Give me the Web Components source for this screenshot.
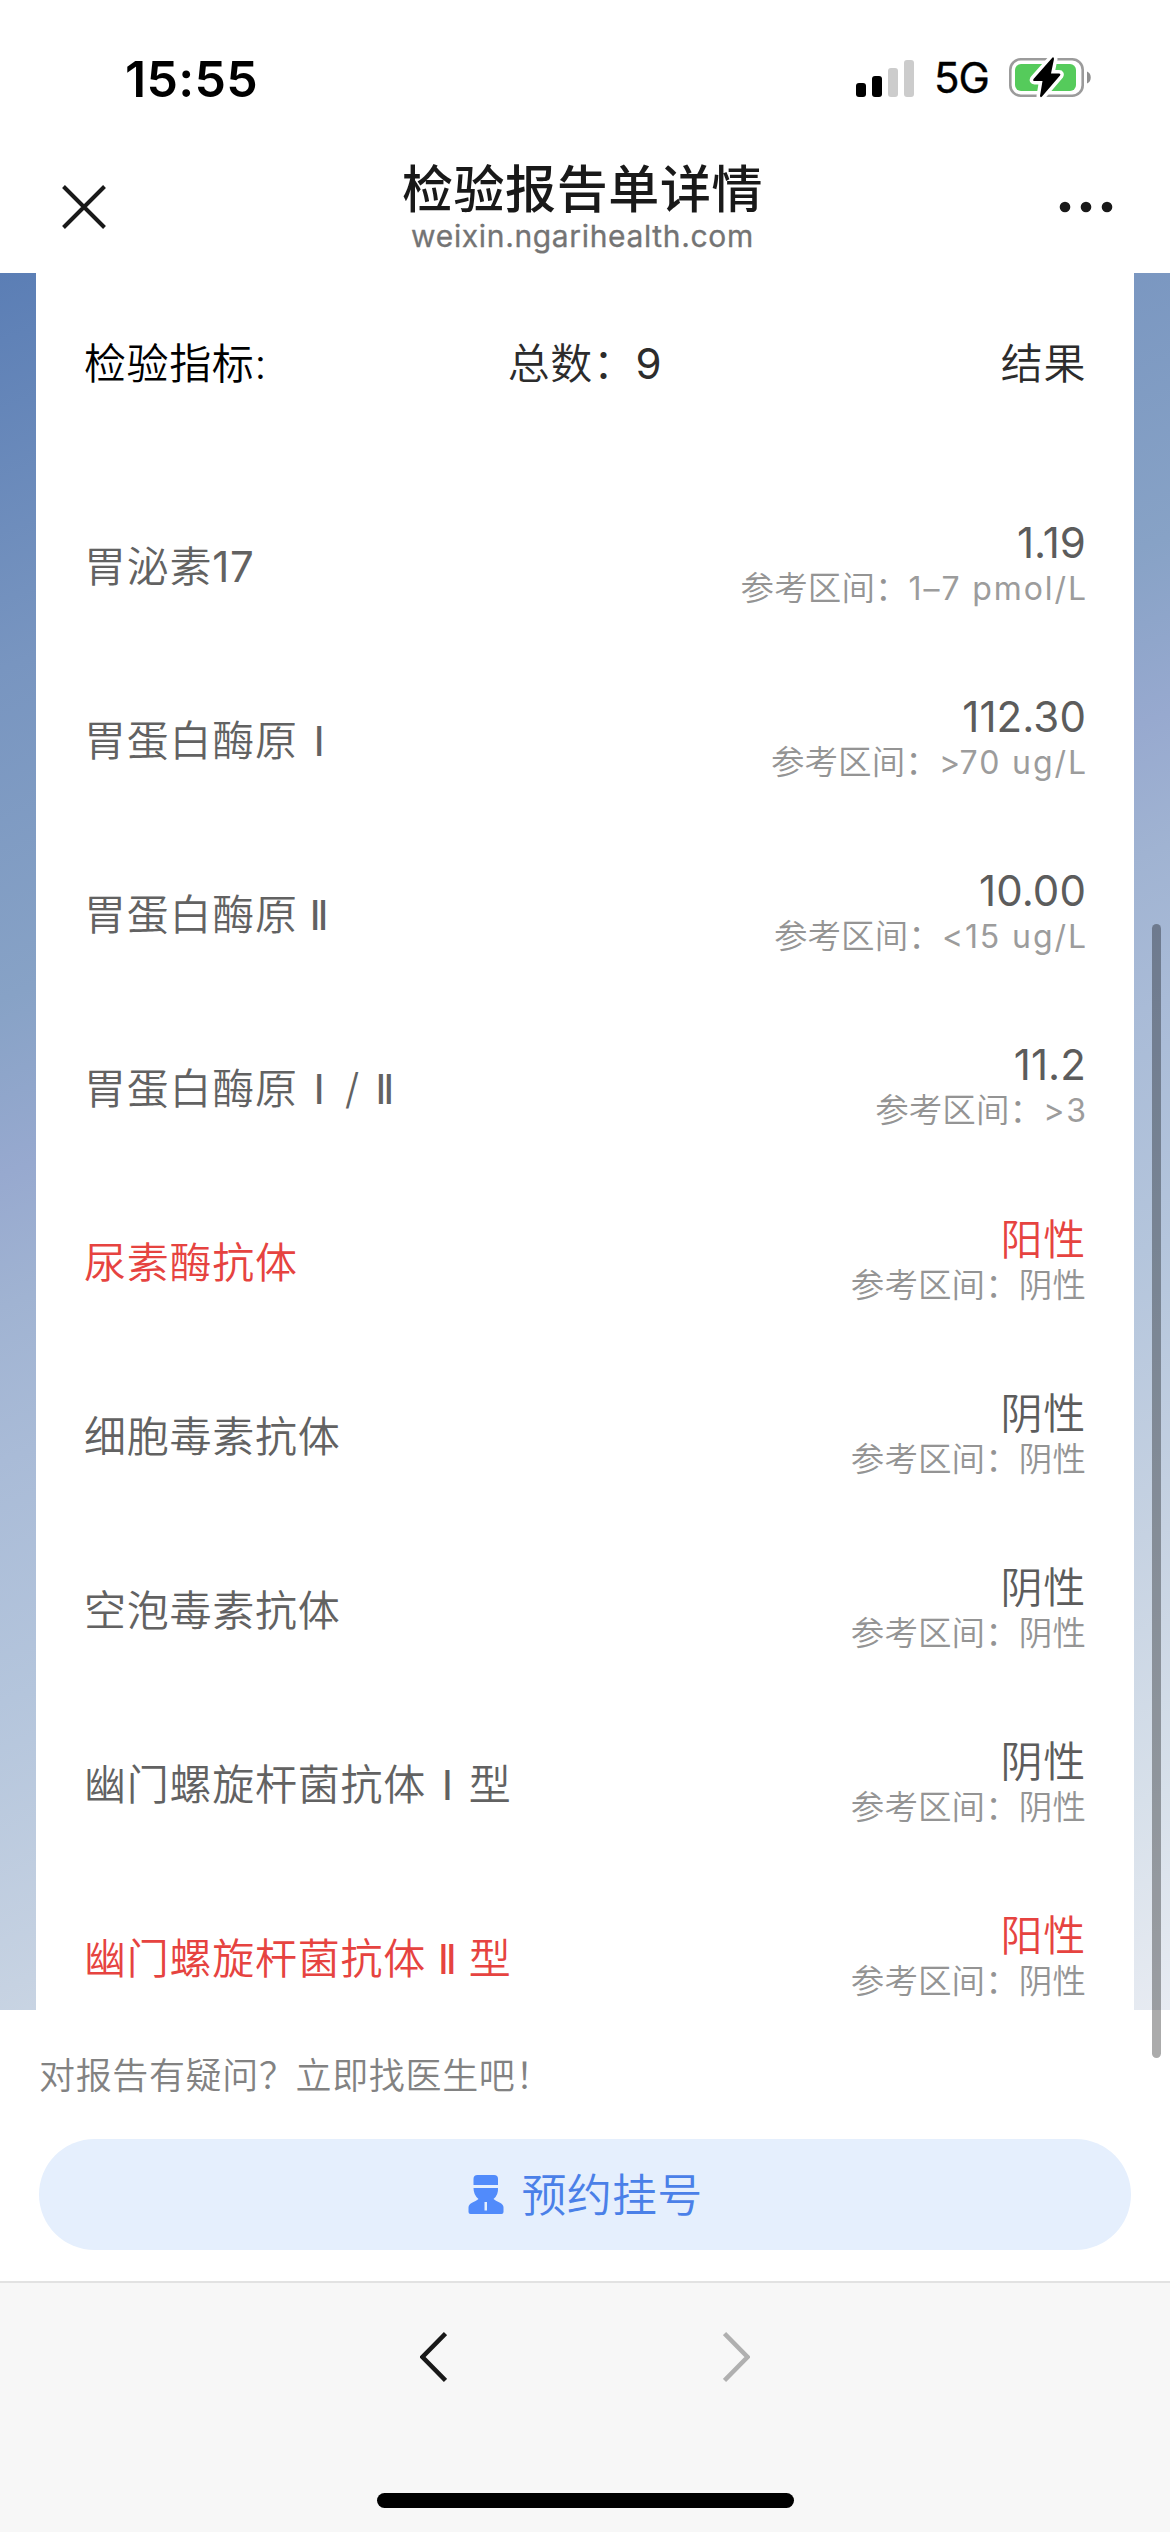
<!DOCTYPE html>
<html lang="zh-CN">
<head>
<meta charset="UTF-8">
<title>检验报告单详情</title>
<style>
  body {
    margin: 0;
    width: 1170px;
    height: 2532px;
    overflow: hidden;
    background: #fff;
    font-family: Inter, "Noto Sans CJK SC", sans-serif;
    font-weight: 350;
  }
</style>
</head>
<body>
<report-app></report-app>

<script>
const items = [
  { name: "胃泌素17", value: "1.19", range: "1–7 pmol/L" },
  { name: "胃蛋白酶原Ⅰ", value: "112.30", range: ">70 ug/L" },
  { name: "胃蛋白酶原Ⅱ", value: "10.00", range: "<15 ug/L" },
  { name: "胃蛋白酶原Ⅰ/Ⅱ", value: "11.2", range: ">3" },
  { name: "尿素酶抗体", value: "阳性", range: "阴性", abnormal: true },
  { name: "细胞毒素抗体", value: "阴性", range: "阴性" },
  { name: "空泡毒素抗体", value: "阴性", range: "阴性" },
  { name: "幽门螺旋杆菌抗体Ⅰ型", value: "阴性", range: "阴性" },
  { name: "幽门螺旋杆菌抗体Ⅱ型", value: "阳性", range: "阴性", abnormal: true },
];

const escapeHtml = s => s.replace(/</g, "&lt;").replace(/>/g, "&gt;");

class StatusBar extends HTMLElement {
  constructor() {
    super();
    this.attachShadow({ mode: "open" });
    this.shadowRoot.innerHTML = `
      <style>
        :host { display:flex; justify-content:space-between; height:156px; box-sizing:border-box; padding:0 78px 0 125px; color:#000; }
        .time { font-size:50px; font-weight:600; line-height:158px; letter-spacing:0.3px; }
        .right { display:flex; align-items:center; }
        .net { font-size:42px; font-weight:400; line-height:160px; width:75px; padding-left:19px; letter-spacing:-1px; -webkit-text-stroke:0.4px #000; }
        svg { display:block; }
      </style>
      <div class="time"><slot></slot></div>
      <div class="right">
        <svg width="59" height="37" viewBox="0 0 59 37">
          <rect x="0" y="23" width="10" height="14" rx="3"/>
          <rect x="16" y="16" width="10" height="21" rx="3"/>
          <rect x="32" y="8" width="10" height="29" rx="3" fill="#ccc"/>
          <rect x="48" y="0" width="10" height="37" rx="3" fill="#ccc"/>
        </svg>
        <div class="net">5G</div>
        <svg width="83" height="44" viewBox="0 0 83 44">
          <rect x="1.3" y="3.3" width="72.4" height="36.4" rx="10.5" fill="none" stroke="#9b9b9b" stroke-width="2.6"/>
          <rect x="6" y="8" width="61" height="27" rx="6" fill="#55cb5b"/>
          <path d="M78 15.5c5 1.500 5 10.500 0 12z" fill="#8f8f8f"/>
          <path d="M43.500 1.500 24.500 23q-1 2 1 2h8l-2.500 15q.500 2 2 .500L51 19.500q1-2-1-2h-8l3-14.500q-.2-2.500-1.500-1.500z" stroke="#fff" stroke-width="7" paint-order="stroke"/>
        </svg>
      </div>
    `;
  }
}

class NavHeader extends HTMLElement {
  constructor() {
    super();
    this.attachShadow({ mode: "open" });
    this.shadowRoot.innerHTML = `
      <style>
        :host { display:flex; justify-content:space-between; height:117px; box-sizing:border-box; padding:0 57px 0 62px; color:#191919; }
        .titles { text-align:center; }
        .title { font-size:51px; font-weight:500; line-height:68px; letter-spacing:0.6px; }
        .url { font-size:30px; font-weight:400; line-height:36px; letter-spacing:0.65px; color:#747474; margin-top:-6px; -webkit-text-stroke:0.3px #747474; }
        svg { display:block; margin-top:29px; }
      </style>
      <svg width="44" height="44" viewBox="0 0 44 44"><path d="M1.500 1.500 42.500 42.500M42.500 1.500 1.500 42.500" stroke="#191919" stroke-width="4"/></svg>
      <div class="titles">
        <div class="title"><slot></slot></div>
        <div class="url"><slot name="url"></slot></div>
      </div>
      <svg width="54" height="44" viewBox="0 0 54 44" fill="#191919"><circle cx="6" cy="22" r="5.300"/><circle cx="27" cy="22" r="5.300"/><circle cx="48" cy="22" r="5.300"/></svg>
    `;
  }
}

class ReportItem extends HTMLElement {
  constructor() {
    super();
    this.attachShadow({ mode: "open" });
  }

  connectedCallback() {
    const { name, value, range, abnormal } = this.item;
    // roman numerals take a full-width cell
    const label = name
      .replace(/\d+/, m => `<span class="digits">${m}</span>`)
      .replace(/[ⅠⅡ]/g, m => `<span class="num">${m}</span>`)
      .replace("</span>/", `</span><span class="slash">/</span>`);
    const latin = s => /^[\x00-\x7f–]+$/.test(s) ? "latin" : "";
    this.shadowRoot.innerHTML = `
      <style>
        :host { display:flex; flex:none; height:174px; align-items:center; justify-content:space-between; color:#666; }
        .name, .value { font-size:42px; letter-spacing:0.75px; white-space:nowrap; }
        .value { line-height:45px; color:${abnormal ? "#e64340" : "#5c5c5c"}; }
        .value.latin { letter-spacing:0.1px; }
        .latin, .digits { font-weight:400; }
        .name { padding-bottom:6px; color:${abnormal ? "#e64340" : "#626262"}; }
        .num { display:inline-block; width:42.75px; line-height:1; letter-spacing:0; text-align:center; font-family:"DejaVu Sans", sans-serif; font-size:40px; font-weight:400; }
        .slash { display:inline-block; width:23px; letter-spacing:0; text-align:center; }
        .result { text-align:right; }
        .range { font-size:33.5px; line-height:46px; letter-spacing:0.1px; color:#949494; white-space:nowrap; }
        .range .latin { font-size:32px; letter-spacing:1.9px; margin-right:-1.9px; color:#9c9c9c; }
      </style>
      <div class="name">${label}</div>
      <div class="result">
        <div class="value ${latin(value)}">${value}</div>
        <div class="range">参考区间：<span class="${latin(range)}">${escapeHtml(range)}</span></div>
      </div>
    `;
  }
}

class ReportCard extends HTMLElement {
  constructor() {
    super();
    this.attachShadow({ mode: "open" });
  }

  connectedCallback() {
    this.shadowRoot.innerHTML = `
      <style>
        :host { display:block; height:1737px; overflow:hidden; padding:0 36px; box-sizing:border-box;
          background:linear-gradient(158.4deg, #5b7eb5 0%, #7895c0 18%, #87a2c6 33%, #97a9cf 41%, #a0b3d2 47%, #a9bbd7 54%, #b4c5dc 65%, #c6d2e2 78%, #d7e0ea 90%, #e7ebf2 100%); }
        .card { display:flex; flex-direction:column; height:100%; box-sizing:border-box; background:#fff; padding:0 48px; }
        .head { display:grid; grid-template-columns:1fr auto 1fr; height:206px; flex:none; font-size:42px; line-height:182px; letter-spacing:0.6px; color:#2c2c2c; }
        .head .first { color:#000; }
        .head .last { text-align:right; }
        .count { font-weight:400; }
      </style>
      <div class="card">
        <div class="head"><span class="first">检验指标:</span><span>总数：<span class="count">${items.length}</span></span><span class="last">结果</span></div>
      </div>
    `;
    const card = this.shadowRoot.querySelector(".card");
    items.forEach(item => {
      const row = document.createElement("report-item");
      row.item = item;
      card.appendChild(row);
    });
  }
}

class BookingBar extends HTMLElement {
  constructor() {
    super();
    this.attachShadow({ mode: "open" });
    this.shadowRoot.innerHTML = `
      <style>
        :host { display:block; height:271px; box-sizing:border-box; padding:39px 39px 0; background:#fff; }
        .hint { font-size:36px; line-height:54px; letter-spacing:0.65px; color:#828282; }
        button { display:flex; align-items:center; justify-content:center; gap:18px; width:100%; height:111px; margin:36px 0 0; padding:0; border:0; border-radius:56px; background:#e5effd; color:#4a80e8; font:inherit; font-size:45px; letter-spacing:0.2px; }
        button span { padding-bottom:4px; }
      </style>
      <div class="hint"><slot name="hint"></slot></div>
      <button>
        <svg width="36" height="39" viewBox="0 0 36 39" fill="#518bfb">
          <path d="M5.500 10V4q0-4 4-4h16.500q4 0 4 4v6z"/>
          <path fill-rule="evenodd" d="M5.500 13h24.500q.5 7-4.500 11 2 1.500 6 3.500 4 2 4 5V37q0 2-2 2H2.500q-2 0-2-2v-4.500q0-3 4-5 4-2 6-3.500-5-4-5-11zM16.500 27v8.500h2.500V27z"/>
        </svg>
        <span><slot></slot></span>
      </button>
    `;
  }
}

class BrowserToolbar extends HTMLElement {
  constructor() {
    super();
    this.attachShadow({ mode: "open" });
    this.shadowRoot.innerHTML = `
      <style>
        :host { display:flex; flex-direction:column; justify-content:space-between; align-items:center; height:251px; box-sizing:border-box; padding:48px 0 24px; background:#f7f7f7; border-top:2px solid #e2e2e2; }
        .arrows { display:flex; gap:276px; }
        .home { width:417px; height:15px; border-radius:8px; background:#000; }
        svg { display:block; fill:none; stroke-width:4.500; }
      </style>
      <div class="arrows">
        <svg width="27" height="52" viewBox="0 0 27 52" stroke="#191919"><path d="M25.500 2.500 2.500 26 25.500 49.500"/></svg>
        <svg width="27" height="52" viewBox="0 0 27 52" stroke="#b0b0b0"><path d="M1.500 2.500 24.500 26 1.500 49.500"/></svg>
      </div>
      <div class="home"></div>
    `;
  }
}

class ReportApp extends HTMLElement {
  constructor() {
    super();
    this.attachShadow({ mode: "open" });
    this.shadowRoot.innerHTML = `
      <style>
        :host { display:flex; flex-direction:column; position:relative; height:2532px; }
        .scroll { position:absolute; top:924px; right:9px; width:9px; height:1134px; border-radius:5px; background:rgba(0,0,0,.33); }
      </style>
      <status-bar>15:55</status-bar>
      <nav-header>检验报告单详情<span slot="url">weixin.ngarihealth.com</span></nav-header>
      <report-card></report-card>
      <booking-bar><span slot="hint">对报告有疑问？立即找医生吧！</span>预约挂号</booking-bar>
      <browser-toolbar></browser-toolbar>
      <div class="scroll"></div>
    `;
  }
}

customElements.define("status-bar", StatusBar);
customElements.define("nav-header", NavHeader);
customElements.define("report-item", ReportItem);
customElements.define("report-card", ReportCard);
customElements.define("booking-bar", BookingBar);
customElements.define("browser-toolbar", BrowserToolbar);
customElements.define("report-app", ReportApp);
</script>
</body>
</html>
